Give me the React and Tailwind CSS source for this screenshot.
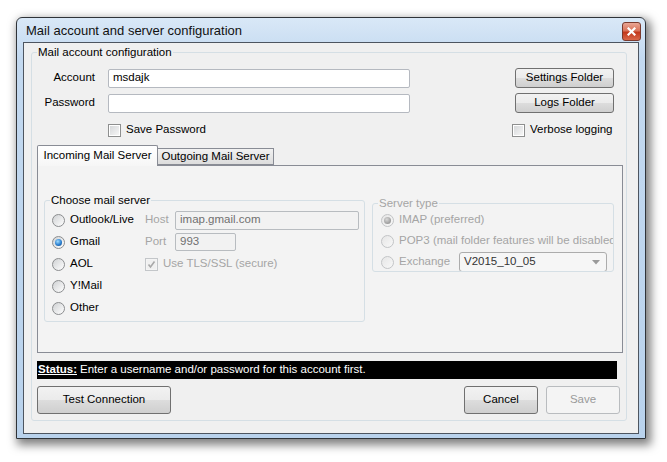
import React from 'react';

// Win7-style dialog: mail account + server configuration

const Radio = ({ checked = false, disabled = false }) => (
    <span
        className={`w-[13px] h-[13px] rounded-full border shrink-0 flex items-center justify-center ${
            disabled
                ? 'border-[#c2c4c6] bg-[linear-gradient(135deg,#e6e6e6,#f8f8f8)]'
                : 'border-[#8b8d8f] bg-[linear-gradient(135deg,#cfd1d3,#ffffff)]'
        }`}
    >
        {checked && (
            <span
                className={`w-[7px] h-[7px] rounded-full ${
                    disabled
                        ? 'bg-[radial-gradient(circle_at_40%_35%,#d8d8d8,#9c9c9c_70%)]'
                        : 'bg-[radial-gradient(circle_at_40%_35%,#9fdcff,#2a7fd0_55%,#0d3f7c)]'
                }`}
            />
        )}
    </span>
);

const Checkbox = ({ checked = false, disabled = false }) => (
    <span
        className={`w-[13px] h-[13px] border shrink-0 flex items-center justify-center ${
            disabled ? 'border-[#c3c6c9] bg-[#f4f4f4]' : 'border-[#8e8f8f] bg-white'
        }`}
    >
        <span
            className={`w-[9px] h-[9px] flex items-center justify-center ${
                disabled ? 'bg-[#f0f0f0]' : 'bg-[linear-gradient(135deg,#d6d8da,#f6f6f6)]'
            }`}
        >
            {checked && (
                <svg width="9" height="9" viewBox="0 0 9 9">
                    <path d="M1.5 4.5 L3.5 7 L7.5 1.5" fill="none" stroke="#a8a8a8" strokeWidth="1.6" />
                </svg>
            )}
        </span>
    </span>
);

const Button = ({ children, className = '', disabled = false }) => (
    <button
        type="button"
        className={`flex items-center justify-center rounded-[3px] border text-[11.5px] ${
            disabled
                ? 'border-[#b9bcbf] bg-[#f4f4f4] text-[#9a9a9a]'
                : 'border-[#707070] bg-[linear-gradient(#f2f2f2_0%,#ebebeb_50%,#dddddd_50%,#cfcfcf_100%)] text-black'
        } ${className}`}
    >
        {children}
    </button>
);

const TextBox = ({ value = '', className = '', disabled = false }) => (
    <div
        className={`flex items-center px-[4px] rounded-[2px] border text-[11.5px] ${
            disabled
                ? 'border-[#b8bcc0] bg-[#f2f2f2] text-[#707070]'
                : 'border-[#b5b9c0] bg-white text-black'
        } ${className}`}
    >
        {value}
    </div>
);

export default function App() {
    return (
        <div className="w-[667px] h-[462px] bg-white overflow-hidden font-['Liberation_Sans',Arial,sans-serif] text-[11.5px] text-black">
            {/* window */}
            <div className="ml-[16px] mt-[17px] w-[630px] h-[422px] flex flex-col border border-[#2f3338] rounded-t-[6px] bg-[linear-gradient(#d9e8f7,#c3d9f0_40px,#b9d2ec)] shadow-[3px_4px_10px_2px_rgba(0,0,0,0.5)]">
                {/* title bar */}
                <div className="h-[24px] flex items-center pl-[9px] pr-[4px] shrink-0">
                    <span className="text-[13px] text-[#111] mt-[1px]">Mail account and server configuration</span>
                    <div className="ml-auto mt-[3px] w-[19px] h-[19px] rounded-[3px] border border-[#7a3a2e] bg-[linear-gradient(#e9a695_0%,#d9735a_45%,#c2381c_55%,#d9684a_100%)] flex items-center justify-center">
                        <svg width="9" height="9" viewBox="0 0 9 9">
                            <path d="M1.5 1.5 L7.5 7.5 M7.5 1.5 L1.5 7.5" stroke="#fff" strokeWidth="2.2" strokeLinecap="square" />
                        </svg>
                    </div>
                </div>

                {/* client area */}
                <div className="mx-[6px] h-[392px] border border-[#4d5560] bg-[#f0f0f0]">
                    <fieldset className="ml-[7px] mt-[2px] w-[596px] min-w-0 border border-[#d5dfe5] rounded-[3px]">
                        <legend className="ml-[5px] px-[1px] leading-[14px]">Mail account configuration</legend>

                        <div className="flex items-center h-[20px] mt-[9px]">
                            <span className="w-[63px] text-right">Account</span>
                            <TextBox value="msdajk" className="ml-[13px] w-[302px] h-[19px]" />
                            <Button className="ml-auto mr-[12px] w-[99px] h-[20px]">Settings Folder</Button>
                        </div>
                        <div className="flex items-center h-[20px] mt-[5px]">
                            <span className="w-[63px] text-right">Password</span>
                            <TextBox className="ml-[13px] w-[302px] h-[19px]" />
                            <Button className="ml-auto mr-[12px] w-[99px] h-[20px]">Logs Folder</Button>
                        </div>
                        <div className="flex items-center h-[16px] mt-[9px]">
                            <div className="ml-[76px] flex items-center gap-[5px]">
                                <Checkbox />
                                <span>Save Password</span>
                            </div>
                            <div className="ml-auto mr-[12px] w-[102px] flex items-center gap-[5px]">
                                <Checkbox />
                                <span className="whitespace-nowrap">Verbose logging</span>
                            </div>
                        </div>

                        {/* tabs */}
                        <div className="ml-[5px] mt-[6px] flex items-end h-[21px]">
                            <div className="relative z-10 w-[121px] h-[21px] -mb-px border border-b-0 border-[#898c95] bg-[linear-gradient(#ffffff,#f6f6f6)] flex items-center justify-center rounded-t-[2px]">
                                Incoming Mail Server
                            </div>
                            <div className="w-[116px] h-[17px] border border-l-0 border-[#898c95] bg-[linear-gradient(#f2f2f2,#dcdcdc)] flex items-center justify-center">
                                Outgoing Mail Server
                            </div>
                        </div>
                        <div className="ml-[5px] w-[586px] h-[188px] border border-[#898c95] bg-[#f3f3f3] flex items-start">
                            {/* choose mail server */}
                            <fieldset className="shrink-0 min-w-0 ml-[6px] mt-[27px] w-[321px] h-[129px] border border-[#d5dfe5] rounded-[3px]">
                                <legend className="ml-[5px] px-[1px] leading-[14px]">Choose mail server</legend>
                                <div className="flex mt-[2px]">
                                    <div className="w-[100px] pl-[7px] flex flex-col">
                                        {['Outlook/Live', 'Gmail', 'AOL', 'Y!Mail', 'Other'].map((name) => (
                                            <div key={name} className="h-[22px] flex items-center gap-[5px]">
                                                <Radio checked={name === 'Gmail'} />
                                                <span>{name}</span>
                                            </div>
                                        ))}
                                    </div>
                                    <div className="flex flex-col text-[#a5a5a5]">
                                        <div className="h-[22px] flex items-center">
                                            <span className="w-[30px]">Host</span>
                                            <TextBox disabled value="imap.gmail.com" className="w-[184px] h-[19px]" />
                                        </div>
                                        <div className="h-[22px] flex items-center">
                                            <span className="w-[30px]">Port</span>
                                            <TextBox disabled value="993" className="w-[61px] h-[18px]" />
                                        </div>
                                        <div className="h-[22px] flex items-center gap-[5px]">
                                            <Checkbox checked disabled />
                                            <span>Use TLS/SSL (secure)</span>
                                        </div>
                                    </div>
                                </div>
                            </fieldset>

                            {/* server type */}
                            <fieldset className="shrink-0 min-w-0 ml-[7px] mt-[30px] w-[242px] h-[76px] border border-[#d5dfe5] rounded-[3px] overflow-hidden text-[#a5a5a5]">
                                <legend className="ml-[5px] px-[1px] leading-[14px]">Server type</legend>
                                <div className="pl-[8px] flex flex-col">
                                    <div className="h-[20px] flex items-center gap-[5px]">
                                        <Radio checked disabled />
                                        <span>IMAP (preferred)</span>
                                    </div>
                                    <div className="h-[22px] flex items-center gap-[5px] whitespace-nowrap">
                                        <Radio disabled />
                                        <span>POP3 (mail folder features will be disabled)</span>
                                    </div>
                                    <div className="h-[20px] flex items-center gap-[5px]">
                                        <Radio disabled />
                                        <span className="w-[55px]">Exchange</span>
                                        <div className="w-[148px] h-[20px] rounded-[3px] border border-[#acacac] bg-[#f6f6f6] flex items-center pl-[4px] pr-[6px] text-[#333]">
                                            <span>V2015_10_05</span>
                                            <svg className="ml-auto" width="8" height="5" viewBox="0 0 8 5">
                                                <path d="M0 0 H8 L4 4.5 Z" fill="#9a9a9a" />
                                            </svg>
                                        </div>
                                    </div>
                                </div>
                            </fieldset>
                        </div>

                        {/* status */}
                        <div className="ml-[5px] mt-[8px] w-[580px] h-[18px] bg-black text-white flex items-center pl-[1px] whitespace-nowrap">
                            <span className="font-bold underline">Status:</span>
                            <span className="ml-[3px]">Enter a username and/or password for this account first.</span>
                        </div>

                        {/* buttons */}
                        <div className="ml-[5px] mt-[7px] mb-[6px] flex items-center">
                            <Button className="w-[134px] h-[28px]">Test Connection</Button>
                            <Button className="ml-auto w-[74px] h-[28px]">Cancel</Button>
                            <Button disabled className="ml-[8px] mr-[6px] w-[74px] h-[28px]">Save</Button>
                        </div>
                    </fieldset>
                </div>
            </div>
        </div>
    );
}
